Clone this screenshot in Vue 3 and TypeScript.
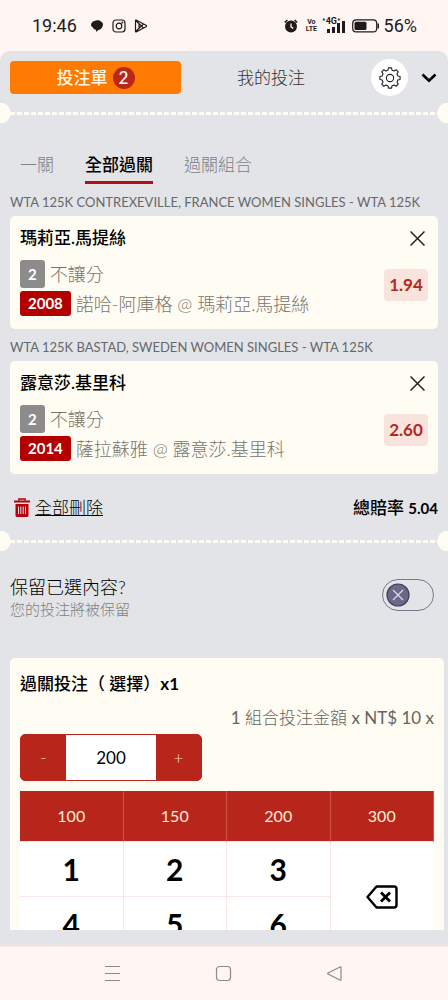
<script setup lang="ts">
import { ref } from 'vue'

interface Bet {
  id: number
  league: string
  pick: string
  market: string
  code: string
  match: string
  odds: string
}

const bets = ref<Bet[]>([
  {
    id: 1,
    league: 'WTA 125K CONTREXEVILLE, FRANCE WOMEN SINGLES - WTA 125K',
    pick: '瑪莉亞.馬提絲',
    market: '不讓分',
    code: '2008',
    match: '諾哈-阿庫格 @ 瑪莉亞.馬提絲',
    odds: '1.94',
  },
  {
    id: 2,
    league: 'WTA 125K BASTAD, SWEDEN WOMEN SINGLES - WTA 125K',
    pick: '露意莎.基里科',
    market: '不讓分',
    code: '2014',
    match: '薩拉蘇雅 @ 露意莎.基里科',
    odds: '2.60',
  },
])

const modes = ['一關', '全部過關', '過關組合']
const mode = ref('全部過關')
const presets = [100, 150, 200, 300]
const digits = [1, 2, 3, 4, 5, 6]
const stake = ref('200')
const keep = ref(false)

function step(by: number) {
  stake.value = String(Math.max(0, Number(stake.value) + by))
}
function remove(id: number) {
  bets.value = bets.value.filter((b) => b.id !== id)
}
</script>

<template>
  <div class="phone">
    <div class="status">
      <span class="clock">19:46</span>
      <svg class="ic" width="14" height="14" viewBox="0 0 14 14">
        <path d="M4.500 2C6.500.8 9.500 1 11 2.500c2.200 1 2.300 3 1.700 4.500-.5 2.800-3 3.800-4.700 4.200L6.500 13l-.6-2.200C4 10.500 3 9.500 2.700 8.300 1 7.500.6 5.500 1.500 4.200 2 3 3 2.200 4.500 2z" fill="#1f1b1a" />
      </svg>
      <svg class="ic" width="14" height="14" viewBox="0 0 14 14" fill="none" stroke="#1f1b1a" stroke-width="1.200">
        <rect x="1" y="1" width="12" height="12" rx="3" />
        <circle cx="7" cy="7" r="2.800" />
        <circle cx="10.400" cy="3.600" r=".4" />
      </svg>
      <svg class="ic" width="14" height="14" viewBox="0 0 14 14" fill="none" stroke="#1f1b1a" stroke-width="1.200" stroke-linejoin="round">
        <path d="M1.500 1.800Q1.500.6 2.600 1.200L12 6.300q1.100.7 0 1.400L2.600 12.800q-1.100.6-1.100-.6zM1.700 1.500 9.500 9M1.700 12.500 9.500 5M5 5.200v3.600" />
      </svg>
      <span class="grow"></span>
      <svg width="14" height="14" viewBox="0 0 14 14">
        <circle cx="7" cy="7.600" r="6" fill="#1f1b1a" />
        <path d="M.8 3.500 3.400 1M13.200 3.500 10.600 1" stroke="#1f1b1a" stroke-width="1.600" />
        <path d="M7 4.500v3.300l2.200 1.600" stroke="#fff5f3" stroke-width="1.300" fill="none" />
      </svg>
      <span class="volte"><span>Vo</span><span>LTE</span></span>
      <span class="signal">
        <span class="gen">⁺4G⁺</span>
        <svg width="18" height="12" viewBox="0 0 18 12" fill="#1f1b1a">
          <rect x="0" y="8" width="3" height="4" />
          <rect x="5" y="6" width="3" height="6" />
          <rect x="10" y="2" width="3" height="10" />
          <rect x="15" y="0" width="3" height="12" />
        </svg>
      </span>
      <svg class="battery" width="28" height="14" viewBox="0 0 28 14">
        <rect x=".7" y=".9" width="24" height="12" rx="3.500" fill="none" stroke="#1f1b1a" stroke-width="1.200" />
        <rect x="2.500" y="2.700" width="12" height="8.400" rx="1.500" fill="#1f1b1a" />
        <path d="M26.200 4.500v5" stroke="#1f1b1a" stroke-width="1.500" />
      </svg>
      <span class="percent">56%</span>
    </div>

    <div class="sheet">
      <main class="scroll">
        <header class="top">
          <button class="slip" type="button">投注單<span class="count">{{ bets.length }}</span></button>
          <button class="mine" type="button">我的投注</button>
          <button class="gear" type="button" aria-label="設定">
            <svg width="22" height="22" viewBox="0 0 24 24" fill="none" stroke="#222" stroke-width="1.200" stroke-linejoin="round">
              <path d="M10.300 1h3.400l.5 2.500q1.200.3 2.200.9l2.300-1.400 2.300 2.300-1.400 2.300q.6 1 .9 2.200l2.500.5v3.400l-2.500.5q-.3 1.200-.9 2.200l1.400 2.300-2.300 2.300-2.300-1.400q-1 .6-2.200.9l-.5 2.500h-3.400l-.5-2.500q-1.200-.3-2.200-.9L5.300 21 3 18.700l1.400-2.300q-.6-1-.9-2.200L1 13.700v-3.400l2.500-.5q.3-1.200.9-2.200L3 5.300 5.300 3l2.300 1.400q1-.6 2.200-.9z" />
              <circle cx="12" cy="12" r="4" />
            </svg>
          </button>
          <button class="plain" type="button" aria-label="收合">
            <svg width="16" height="10" viewBox="0 0 16 10" fill="none" stroke="#000" stroke-width="2.600">
              <path d="M1.500 1.500 8 7.800l6.500-6.300" />
            </svg>
          </button>
        </header>

        <div class="tear"></div>

        <nav class="modes">
          <button v-for="m in modes" :key="m" type="button" :class="{ on: m === mode }" @click="mode = m">{{ m }}</button>
        </nav>

        <section v-for="b in bets" :key="b.id" class="group">
          <h2 class="league">{{ b.league }}</h2>
          <article class="bet">
            <div class="head">
              <h3>{{ b.pick }}</h3>
              <button class="remove" type="button" aria-label="移除" @click="remove(b.id)">
                <svg width="15" height="15" viewBox="0 0 15 15" stroke="#222" stroke-width="1.500">
                  <path d="M.5.500l14 14M14.500.500l-14 14" />
                </svg>
              </button>
            </div>
            <div class="detail">
              <div class="lines">
                <p><span class="tag gray">2</span>{{ b.market }}</p>
                <p><span class="tag red">{{ b.code }}</span>{{ b.match }}</p>
              </div>
              <span class="odds">{{ b.odds }}</span>
            </div>
          </article>
        </section>

        <div class="summary">
          <button class="clear" type="button" @click="bets = []">
            <svg width="16" height="20" viewBox="0 0 16 20">
              <path d="M5 2.500V1h6v1.500" fill="none" stroke="#b3000c" stroke-width="1.600" />
              <path d="M0 2.600h16v2H0zM1.500 6h13v11.500q0 1.500-1.500 1.500H3q-1.500 0-1.500-1.500z" fill="#b3000c" />
              <path d="M4.500 8.500v7.500M6.800 8.500v7.500M9.200 8.500v7.500M11.500 8.500v7.500" stroke="#f6dcdc" stroke-width="1" />
            </svg>
            <span>全部刪除</span>
          </button>
          <strong>總賠率 <span class="total">5.04</span></strong>
        </div>

        <div class="tear"></div>

        <div class="keep">
          <label for="keep">
            <span class="question">保留已選內容?</span>
            <span class="hint">您的投注將被保留</span>
          </label>
          <span class="switch">
            <input id="keep" v-model="keep" type="checkbox" />
            <svg class="knob" :class="{ right: keep }" width="24" height="24" viewBox="0 0 24 24">
              <circle cx="12" cy="12" r="11" fill="#6a6988" stroke="#3f3f5a" stroke-width="1.200" />
              <path d="M7 7l10 10M17 7 7 17" stroke="#dcdce8" stroke-width="1.200" />
            </svg>
          </span>
        </div>

        <section class="stake">
          <h3>過關投注（ 選擇）<b>x1</b></h3>
          <p class="formula">1 <span class="thin">組合投注金額</span> x NT$ 10 x</p>
          <div class="stepper">
            <button type="button" aria-label="減少" @click="step(-10)">-</button>
            <input v-model="stake" type="text" inputmode="numeric" aria-label="投注金額" />
            <button type="button" aria-label="增加" @click="step(10)">+</button>
          </div>
          <div class="pad">
            <button v-for="p in presets" :key="'p' + p" class="preset" type="button" @click="stake = String(p)">{{ p }}</button>
            <button v-for="d in digits" :key="d" class="digit" type="button" @click="stake += d">{{ d }}</button>
            <button class="back" type="button" aria-label="退格" @click="stake = stake.slice(0, -1)">
              <svg width="32" height="24" viewBox="0 0 32 24" fill="none" stroke="#000" stroke-width="2.400" stroke-linejoin="round">
                <path d="M10.500 1.500H28q2.500 0 2.500 2.500v16q0 2.500-2.500 2.500H10.500L1.500 12z" />
                <path d="M15 7.500l9 9M24 7.500l-9 9" stroke-width="2.800" />
              </svg>
            </button>
          </div>
        </section>
      </main>
    </div>

    <footer class="system">
      <svg width="17" height="17" viewBox="0 0 17 17" stroke="#8f8886" stroke-width="1.200"><path d="M1 1.500h15M1 8.500h15M1 15.500h15" /></svg>
      <svg width="17" height="17" viewBox="0 0 17 17" fill="none" stroke="#8f8886" stroke-width="1.200"><rect x="1.500" y="1.500" width="14" height="14" rx="3" /></svg>
      <svg width="17" height="17" viewBox="0 0 17 17" fill="none" stroke="#8f8886" stroke-width="1.200" stroke-linejoin="round"><path d="M15 2.500v12q0 1-1 .5L2 9q-1-.5 0-1L14 2q1-.5 1 .5z" /></svg>
    </footer>
  </div>
</template>

<style>
body {
  margin: 0;
  background: #fff5f3;
}
</style>

<style scoped>
* {
  box-sizing: border-box;
}
h2, h3, p {
  margin: 0;
}
button {
  padding: 0;
  border: 0;
  background: none;
  font: inherit;
  color: inherit;
  cursor: pointer;
}
svg {
  display: block;
  flex: none;
}
.phone {
  display: flex;
  flex-direction: column;
  height: 100vh;
  background: #fff5f3;
  font-family: Lato, "Noto Sans CJK TC", sans-serif;
  font-size: 17px;
  line-height: 24px;
  color: #000;
}
.status {
  display: flex;
  align-items: center;
  flex: none;
  height: 51px;
  padding: 0 31px 0 32px;
  font-family: Roboto, sans-serif;
  font-size: 18px;
  color: #1f1b1a;
}
.clock {
  margin-right: 5px;
}
.ic {
  margin-left: 8px;
}
.grow {
  flex: 1;
}
.volte {
  display: flex;
  flex-direction: column;
  align-items: center;
  margin-left: 8px;
  font-size: 7px;
  font-weight: 700;
  line-height: 7px;
}
.signal {
  display: flex;
  flex-direction: column;
  align-items: flex-end;
  margin-left: 5px;
}
.signal svg {
  margin-top: -3px;
}
.gen {
  padding-right: 4px;
  font-size: 9px;
  font-weight: 700;
  line-height: 6px;
}
.battery {
  margin: 0 4px 0 7px;
}
.sheet {
  flex: 1;
  min-height: 0;
  padding-bottom: 16px;
  background: #e3e4e7;
  border-radius: 10px 10px 0 0;
  overflow: hidden;
}
.scroll {
  height: 100%;
  overflow: hidden auto;
  scrollbar-width: none;
}
.top {
  display: flex;
  align-items: center;
  padding: 8px 11px 0 10px;
}
.slip,
.mine {
  display: flex;
  align-items: center;
  justify-content: center;
  height: 33px;
}
.slip {
  flex: 19 1 0;
  gap: 5px;
  border-radius: 4px;
  background: #ff7a00;
  color: #fff6e5;
  font-weight: 500;
}
.count {
  width: 22px;
  line-height: 22px;
  border-radius: 50%;
  background: #b9261b;
  color: #fff;
}
.mine {
  flex: 20 1 0;
  color: #333;
  font-weight: 300;
}
.gear {
  display: flex;
  align-items: center;
  justify-content: center;
  width: 37px;
  height: 37px;
  margin: 0 13px 0 10px;
  border-radius: 50%;
  background: #fff;
}
.tear {
  height: 20px;
  background:
    radial-gradient(circle at 0 50%, #fffdf3 10px, transparent 11px),
    radial-gradient(circle at 100% 50%, #fffdf3 10px, transparent 11px),
    repeating-linear-gradient(90deg, #fffdf6 0 5px, transparent 5px 7px) 10px 9px / calc(100% - 20px) 3px no-repeat;
}
.top + .tear {
  margin-top: 7px;
}
.modes {
  display: flex;
  gap: 31px;
  padding: 30px 20px 9px;
  color: #808285;
  font-weight: 300;
}
.modes button {
  height: 31px;
  padding-bottom: 4px;
  border-bottom: 3px solid transparent;
}
.modes .on {
  border-color: #b01117;
  color: #000;
  font-weight: 500;
}
.group {
  margin: 0 10px 9px;
}
.league {
  padding-bottom: 5px;
  font-size: 13px;
  font-weight: 400;
  line-height: 18px;
  color: #66686b;
  white-space: nowrap;
}
.bet {
  padding: 10px 10px 13px;
  border-radius: 5px;
  background: #fffdf3;
}
.head,
.detail,
.summary,
.keep {
  display: flex;
  align-items: center;
  justify-content: space-between;
}
.head {
  padding-bottom: 10px;
}
.remove {
  margin-right: 3px;
}
.bet h3,
.stake h3 {
  font-size: 17px;
  font-weight: 500;
}
.detail {
  align-items: flex-start;
}
.lines {
  display: grid;
  gap: 3px;
}
.lines p {
  display: flex;
  align-items: center;
  gap: 5px;
  font-size: 18px;
  font-weight: 300;
  color: #77756f;
  white-space: nowrap;
}
.tag {
  padding: 0 8px;
  border-radius: 3px;
  color: #fff;
  font-size: 15px;
  font-weight: 700;
}
.gray {
  line-height: 28px;
  background: #8c8c8c;
}
.red {
  line-height: 25px;
  background: #b30000;
}
.odds {
  width: 44px;
  margin-top: 9px;
  border-radius: 4px;
  background: #f8e3dd;
  color: #b02a22;
  font-size: 17px;
  font-weight: 700;
  line-height: 32px;
  text-align: center;
}
.summary {
  padding: 13px 10px 11px 14px;
}
.summary strong {
  font-weight: 500;
}
.total {
  font-size: 15px;
  font-weight: 700;
}
.clear {
  display: flex;
  align-items: center;
  gap: 5px;
  font-weight: 300;
  text-decoration: underline;
}
.keep {
  align-items: flex-start;
  padding: 24px 14px 39px 10px;
}
.keep label {
  display: flex;
  flex-direction: column;
  font-weight: 300;
}
.question {
  font-size: 18px;
}
.hint {
  font-size: 15px;
  line-height: 20px;
  color: #7d7f84;
}
.switch {
  position: relative;
  display: block;
  margin-top: 4px;
}
.switch input {
  display: block;
  appearance: none;
  width: 52px;
  height: 32px;
  margin: 0;
  border: 1px solid #77788a;
  border-radius: 16px;
}
.knob {
  position: absolute;
  top: 4px;
  left: 4px;
  pointer-events: none;
}
.knob.right {
  left: 24px;
}
.stake {
  margin: 0 4px 0 10px;
  padding: 14px 10px 0;
  border-radius: 5px 5px 0 0;
  background: #fffdf3;
}
.formula {
  padding: 10px 0 4px;
  text-align: right;
  color: #66645e;
}
.thin {
  font-weight: 300;
}
.stepper {
  display: flex;
  width: 182px;
  height: 47px;
  border: 1px solid #b8261b;
  border-radius: 5px;
  background: #b8261b;
  overflow: hidden;
}
.stepper button {
  width: 45px;
  color: #f6dcc8;
  font-weight: 300;
}
.stepper input {
  flex: 1;
  min-width: 0;
  padding: 0;
  border: 0;
  background: #fff;
  font: inherit;
  text-align: center;
}
.pad {
  display: grid;
  grid-template-columns: repeat(4, 1fr);
  grid-template-rows: 51px 55px 55px;
  margin-top: 10px;
  background: #fff;
}
.pad button {
  border-right: 1px solid #fbe6e6;
  border-bottom: 1px solid #fbe6e6;
}
.pad .preset {
  border-right-color: #cf5148;
  background: #b8261b;
  color: #ffead8;
  font-size: 16px;
}
.pad .digit {
  font-size: 30px;
  font-weight: 700;
}
.pad .back {
  display: flex;
  align-items: center;
  justify-content: center;
  grid-area: 2 / 4 / 4 / 5;
  border-right: 0;
}
.system {
  display: flex;
  align-items: center;
  justify-content: center;
  gap: 94px;
  flex: none;
  height: 54px;
  padding-right: 2px;
  border-top: 1px solid #fae8e6;
}
</style>
